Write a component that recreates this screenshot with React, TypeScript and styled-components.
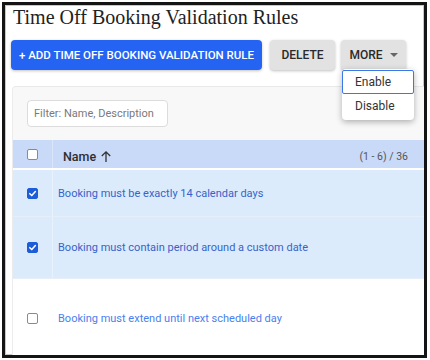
import React from 'react';
import styled, {createGlobalStyle} from 'styled-components';

const GlobalStyle = createGlobalStyle`
  html, body {
    margin: 0;
    padding: 0;
    background: #fff;
  }
  * {
    box-sizing: border-box;
  }
`;

interface IRule {
  id: number;
  name: string;
  checked: boolean;
  height: number;
}

const rules: IRule[] = [
  {id: 1, name: 'Booking must be exactly 14 calendar days', checked: true, height: 47},
  {id: 2, name: 'Booking must contain period around a custom date', checked: true, height: 62},
  {id: 3, name: 'Booking must extend until next scheduled day', checked: false, height: 80},
];

const CheckIcon = () => (
  <svg width="9" height="9" viewBox="0 0 10 10">
    <path d="M2 5.2 L4.2 7.3 L8.2 2.8" fill="none" stroke="#fff" strokeWidth="1.7" strokeLinecap="round" strokeLinejoin="round" />
  </svg>
);

const App: React.FC = () => {
  return (
    <>
      <GlobalStyle />
      <StyledFrame>
        <StyledTitle>Time Off Booking Validation Rules</StyledTitle>
        <StyledToolbar>
          <StyledPrimaryButton>+ Add time off booking validation rule</StyledPrimaryButton>
          <StyledButton>Delete</StyledButton>
          <StyledMoreWrapper>
            <StyledButton>
              More
              <StyledCaret />
            </StyledButton>
            <StyledMenu>
              <StyledMenuItem $active>Enable</StyledMenuItem>
              <StyledMenuItem>Disable</StyledMenuItem>
            </StyledMenu>
          </StyledMoreWrapper>
        </StyledToolbar>
        <StyledCard>
          <StyledFilterBar>
            <StyledFilter placeholder="Filter: Name, Description" />
          </StyledFilterBar>
          <StyledHeaderRow>
            <StyledCheckCell>
              <StyledCheckbox $checked={false} />
            </StyledCheckCell>
            <StyledHeaderName>
              Name
              <svg width="12" height="13" viewBox="0 0 12 13">
                <path d="M6 12 V2 M1.8 6 L6 1.8 L10.2 6" fill="none" stroke="#333" strokeWidth="1.3" />
              </svg>
            </StyledHeaderName>
            <StyledCount>(1 - 6) / 36</StyledCount>
          </StyledHeaderRow>
          {rules.map((rule) => (
            <StyledRow key={rule.id} $selected={rule.checked} $height={rule.height}>
              <StyledCheckCell>
                <StyledCheckbox $checked={rule.checked}>
                  {rule.checked && <CheckIcon />}
                </StyledCheckbox>
              </StyledCheckCell>
              <StyledRuleName $selected={rule.checked}>{rule.name}</StyledRuleName>
            </StyledRow>
          ))}
        </StyledCard>
      </StyledFrame>
    </>
  );
};

const StyledFrame = styled.div`
  position: relative;
  margin: 2px 0 0 2px;
  width: 425px;
  height: 356px;
  border: 3.5px solid #141414;
  box-shadow: inset 0 0 0 1px #c8c8c8;
  background: #fff;
  overflow: hidden;
  padding: 0 0 0 6px;
  font-family: Roboto, "Liberation Sans", sans-serif;
`;

const StyledTitle = styled.h1`
  margin: 0 0 11px 2px;
  font-family: "Liberation Serif", serif;
  font-weight: 400;
  font-size: 20px;
  line-height: 24px;
  color: #222;
`;

const StyledToolbar = styled.div`
  display: flex;
  align-items: flex-start;
  height: 30px;
`;

const StyledButtonBase = styled.button`
  display: flex;
  align-items: center;
  justify-content: center;
  height: 30px;
  padding: 0;
  border: none;
  border-radius: 4px;
  font-family: Roboto, "Liberation Sans", sans-serif;
  font-weight: 500;
  font-size: 12px;
  white-space: nowrap;
  text-transform: uppercase;
  box-shadow: 0 1px 3px rgba(0, 0, 0, 0.25);
  cursor: pointer;
`;

const StyledPrimaryButton = styled(StyledButtonBase)`
  width: 251px;
  background: #2563f2;
  color: #fff;
  font-size: 11.5px;
`;

const StyledButton = styled(StyledButtonBase)`
  width: 65px;
  margin-left: 8px;
  background: #e2e2e2;
  color: #2a2a2a;
`;

const StyledMoreWrapper = styled.div`
  position: relative;
  & > button {
    margin-left: 6px;
  }
`;

const StyledCaret = styled.span`
  width: 0;
  height: 0;
  margin-left: 7px;
  border-left: 4px solid transparent;
  border-right: 4px solid transparent;
  border-top: 4px solid #666;
`;

const StyledMenu = styled.div`
  position: absolute;
  top: 29px;
  left: 7px;
  width: 72px;
  padding: 1px 0 2px;
  background: #fff;
  border-radius: 4px;
  box-shadow: 0 2px 6px rgba(0, 0, 0, 0.3);
  z-index: 2;
`;

const StyledMenuItem = styled.div<{$active?: boolean}>`
  height: 24px;
  display: flex;
  align-items: center;
  padding-left: 12px;
  font-size: 12px;
  color: #333;
  border: 1.5px solid ${(p) => (p.$active ? '#3a78e8' : 'transparent')};
  border-radius: 2px;
`;

const StyledCard = styled.div`
  margin: 16px 0 0 1px;
  background: #f8f8f8;
  border-top: 1px solid #e9e9e9;
  border-left: 1px solid #ececec;
  border-top-left-radius: 4px;
`;

const StyledFilterBar = styled.div`
  padding: 13px 0 13px 14px;
`;

const StyledFilter = styled.input`
  width: 141px;
  height: 27px;
  border: 1px solid #dcdcdc;
  border-radius: 4px;
  background: #fff;
  padding: 0 6px;
  font-family: Roboto, "Liberation Sans", sans-serif;
  font-size: 11px;
  color: #333;
  outline: none;
  &::placeholder {
    color: #7a7a7a;
  }
`;

const StyledHeaderRow = styled.div`
  display: flex;
  align-items: center;
  height: 30px;
  background: #c9d9f8;
  border-bottom: 2px solid #fff;
`;

const StyledCheckCell = styled.div`
  flex: 0 0 40px;
  align-self: stretch;
  display: flex;
  align-items: center;
  justify-content: center;
  border-right: 1px solid rgba(255, 255, 255, 0.35);
`;

const StyledCheckbox = styled.span<{$checked: boolean}>`
  width: 11px;
  height: 11px;
  display: flex;
  align-items: center;
  justify-content: center;
  border-radius: 2px;
  background: ${(p) => (p.$checked ? '#1d5ed8' : '#fff')};
  border: 1.3px solid ${(p) => (p.$checked ? '#1d5ed8' : '#8a8a8a')};
`;

const StyledHeaderName = styled.div`
  flex: 1;
  display: flex;
  align-items: center;
  gap: 4px;
  padding-left: 10px;
  padding-top: 4px;
  font-size: 12.5px;
  font-weight: 500;
  color: #2e2e2e;
`;

const StyledCount = styled.div`
  padding-right: 16px;
  padding-top: 4px;
  font-size: 10.5px;
  color: #555;
`;

const StyledRow = styled.div<{$selected: boolean; $height: number}>`
  display: flex;
  align-items: center;
  height: ${(p) => p.$height}px;
  background: ${(p) => (p.$selected ? '#dcebfc' : '#fff')};
  border-bottom: 1px solid ${(p) => (p.$selected ? '#e5eef9' : '#f0f0f0')};
`;

const StyledRuleName = styled.div<{$selected: boolean}>`
  padding-left: 5px;
  font-size: 11px;
  color: ${(p) => (p.$selected ? '#3763c8' : '#4a80ee')};
`;

export default App;
